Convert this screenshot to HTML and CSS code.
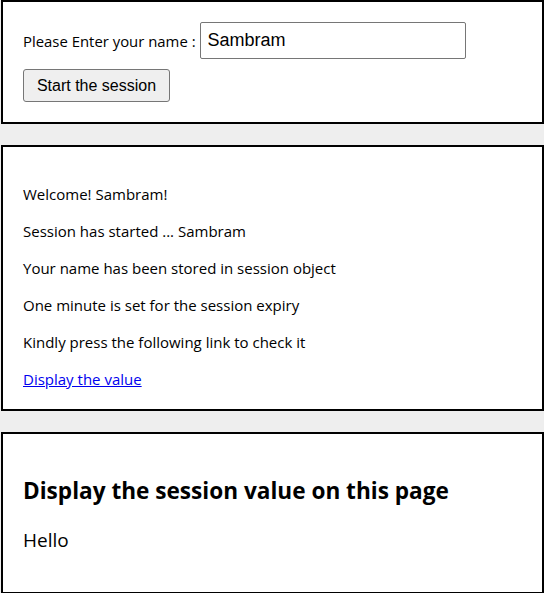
FILE: index.html
```html
<!DOCTYPE html>
<html>
<head>
<meta charset="utf-8">
<link rel="stylesheet" href="styles.css">
</head>
<body>
<main class="page">
  <section class="box form-box">
    <div class="row">
      <label class="label" for="name">Please Enter your name :</label>
      <input class="name-input" id="name" type="text" value="Sambram">
    </div>
    <div><button class="btn" type="button">Start the session</button></div>
  </section>
  <section class="box info-box">
    <p class="line">Welcome! Sambram!</p>
    <p class="line">Session has started ... Sambram</p>
    <p class="line">Your name has been stored in session object</p>
    <p class="line">One minute is set for the session expiry</p>
    <p class="line">Kindly press the following link to check it</p>
    <p class="line"><a class="link" href="#">Display the value</a></p>
  </section>
  <section class="box value-box">
    <h2 class="heading">Display the session value on this page</h2>
    <p class="hello">Hello</p>
  </section>
</main>
</body>
</html>
```
FILE: styles.css
```css
html, body {
  margin: 0;
  padding: 0;
  background: #eeeeee;
}
body {
  font-family: "Open Sans", "Noto Sans", sans-serif;
  color: #000;
}
.page {
  display: flex;
  flex-direction: column;
  gap: 21px;
  margin-left: 1px;
  width: 543px;
}
.box {
  background: #fff;
  border: 2px solid #000;
  box-sizing: border-box;
}
.form-box {
  padding: 20px 20px;
  display: flex;
  flex-direction: column;
  gap: 10px;
}
.row {
  display: flex;
  align-items: center;
  gap: 4px;
}
.label {
  font-size: 14.9px;
}
.name-input {
  width: 266px;
  height: 37px;
  box-sizing: border-box;
  border: 1px solid #767676;
  border-radius: 2px;
  padding: 1px 7px;
  font-family: "Liberation Sans", Arial, sans-serif;
  font-size: 18px;
  color: #000;
  margin: 0;
}
.btn {
  width: 147px;
  height: 33px;
  box-sizing: border-box;
  background: #efefef;
  border: 1px solid #767676;
  border-radius: 3px;
  font-family: "Liberation Sans", Arial, sans-serif;
  font-size: 16px;
  color: #000;
  padding: 0;
  margin: 0;
}
.info-box {
  padding: 37px 20px 19px;
  display: flex;
  flex-direction: column;
  gap: 16px;
}
.line {
  margin: 0;
  font-size: 15px;
  line-height: 21px;
}
.link {
  color: #0000ee;
  text-decoration: underline;
}
.value-box {
  padding: 41px 20px 37px;
  height: 162px;
}
.heading {
  margin: 0;
  font-size: 22.6px;
  line-height: 32px;
  font-weight: 700;
}
.hello {
  margin: 20px 0 0;
  font-size: 19px;
  line-height: 27px;
}
```
